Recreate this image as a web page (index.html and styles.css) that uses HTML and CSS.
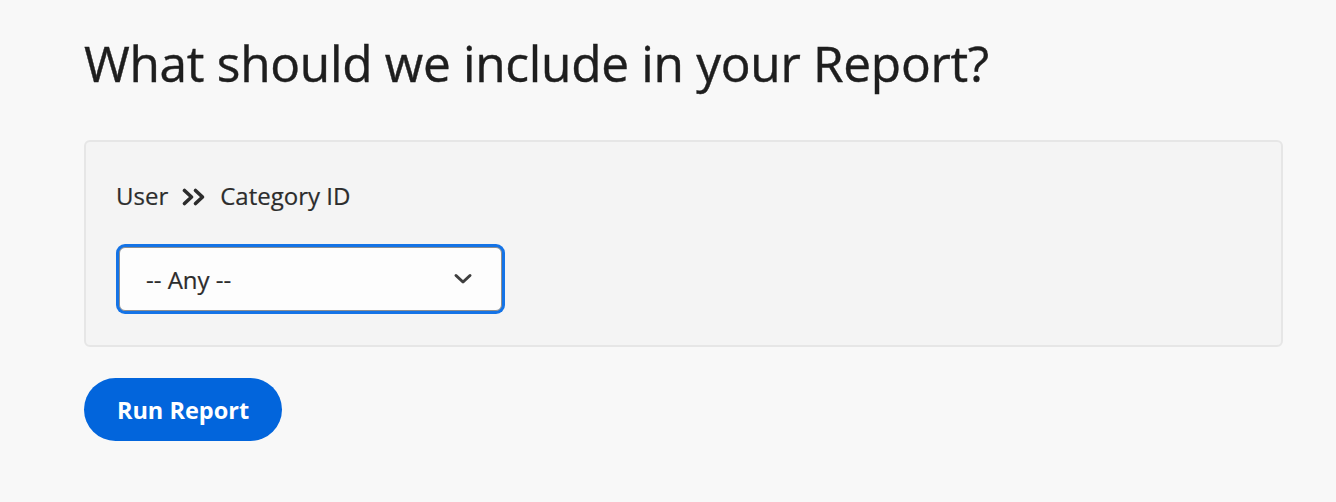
FILE: index.html
```html
<!DOCTYPE html>
<html lang="en">
<head>
<meta charset="utf-8">
<title>Report</title>
<link rel="stylesheet" href="styles.css">
</head>
<body>
<main class="page">
  <h1 class="title">What should we include in your Report?</h1>
  <section class="panel">
    <div class="crumb">
      <span>User</span>
      <svg class="crumb-icon" viewBox="0 0 24 20" width="24" height="20" aria-hidden="true">
        <path d="M2.5 3.5 L9.5 10 L2.5 16.5" fill="none" stroke="#2c2c2c" stroke-width="3.6" stroke-linecap="round" stroke-linejoin="round"/>
        <path d="M13.5 3.5 L20.5 10 L13.5 16.5" fill="none" stroke="#2c2c2c" stroke-width="3.6" stroke-linecap="round" stroke-linejoin="round"/>
      </svg>
      <span>Category ID</span>
    </div>
    <div class="select">
      <span class="select-value">-- Any --</span>
      <svg class="chevron" viewBox="0 0 20 12" width="20" height="12" aria-hidden="true">
        <path d="M3 2.5 L10 9 L17 2.5" fill="none" stroke="#3e3e3e" stroke-width="3" stroke-linecap="round" stroke-linejoin="round"/>
      </svg>
    </div>
  </section>
  <button class="run" type="button">Run Report</button>
</main>
</body>
</html>
```

FILE: styles.css
```css
html, body {
  margin: 0;
  padding: 0;
  background: #f8f8f8;
}
body {
  font-family: "Open Sans", "Noto Sans", sans-serif;
  color: #222222;
}
.page {
  padding: 22px 53px 0 84px;
  display: flex;
  flex-direction: column;
  align-items: flex-start;
}
.title {
  margin: 0;
  font-weight: 400;
  font-size: 49.6px;
  line-height: 82px;
  letter-spacing: -0.3px;
  color: #1e1e1e;
  -webkit-text-stroke: 0.4px #1e1e1e;
}
.panel {
  align-self: stretch;
  margin-top: 36px;
  background: #f4f4f4;
  border: 2px solid #e6e6e6;
  border-radius: 6px;
  padding: 37px 30px 34px 30px;
  display: flex;
  flex-direction: column;
  gap: 34px;
}
.crumb {
  display: flex;
  align-items: center;
  gap: 14px;
  font-size: 24px;
  line-height: 34px;
  color: #2c2c2c;
  -webkit-text-stroke: 0.2px #2c2c2c;
}
.crumb-icon {
  display: block;
  margin-top: 2px;
}
.select {
  background: #fdfdfd;
  border: 1px solid #8e8e8e;
  border-radius: 6px;
  box-shadow: 0 0 0 3px #1473e6;
  display: flex;
  align-items: center;
  justify-content: space-between;
  padding: 0 28px 0 26px;
  box-sizing: border-box;
  height: 64px;
  width: 383px;
  margin-left: 3px;
  font-size: 24px;
  color: #2c2c2c;
  -webkit-text-stroke: 0.2px #2c2c2c;
}
.chevron {
  display: block;
}
.run {
  margin-top: 31px;
  width: 198px;
  height: 63px;
  border: none;
  border-radius: 32px;
  background: #0265dc;
  color: #ffffff;
  font-family: "Open Sans", "Noto Sans", sans-serif;
  font-weight: 700;
  font-size: 23.5px;
  padding: 0;
}
```
